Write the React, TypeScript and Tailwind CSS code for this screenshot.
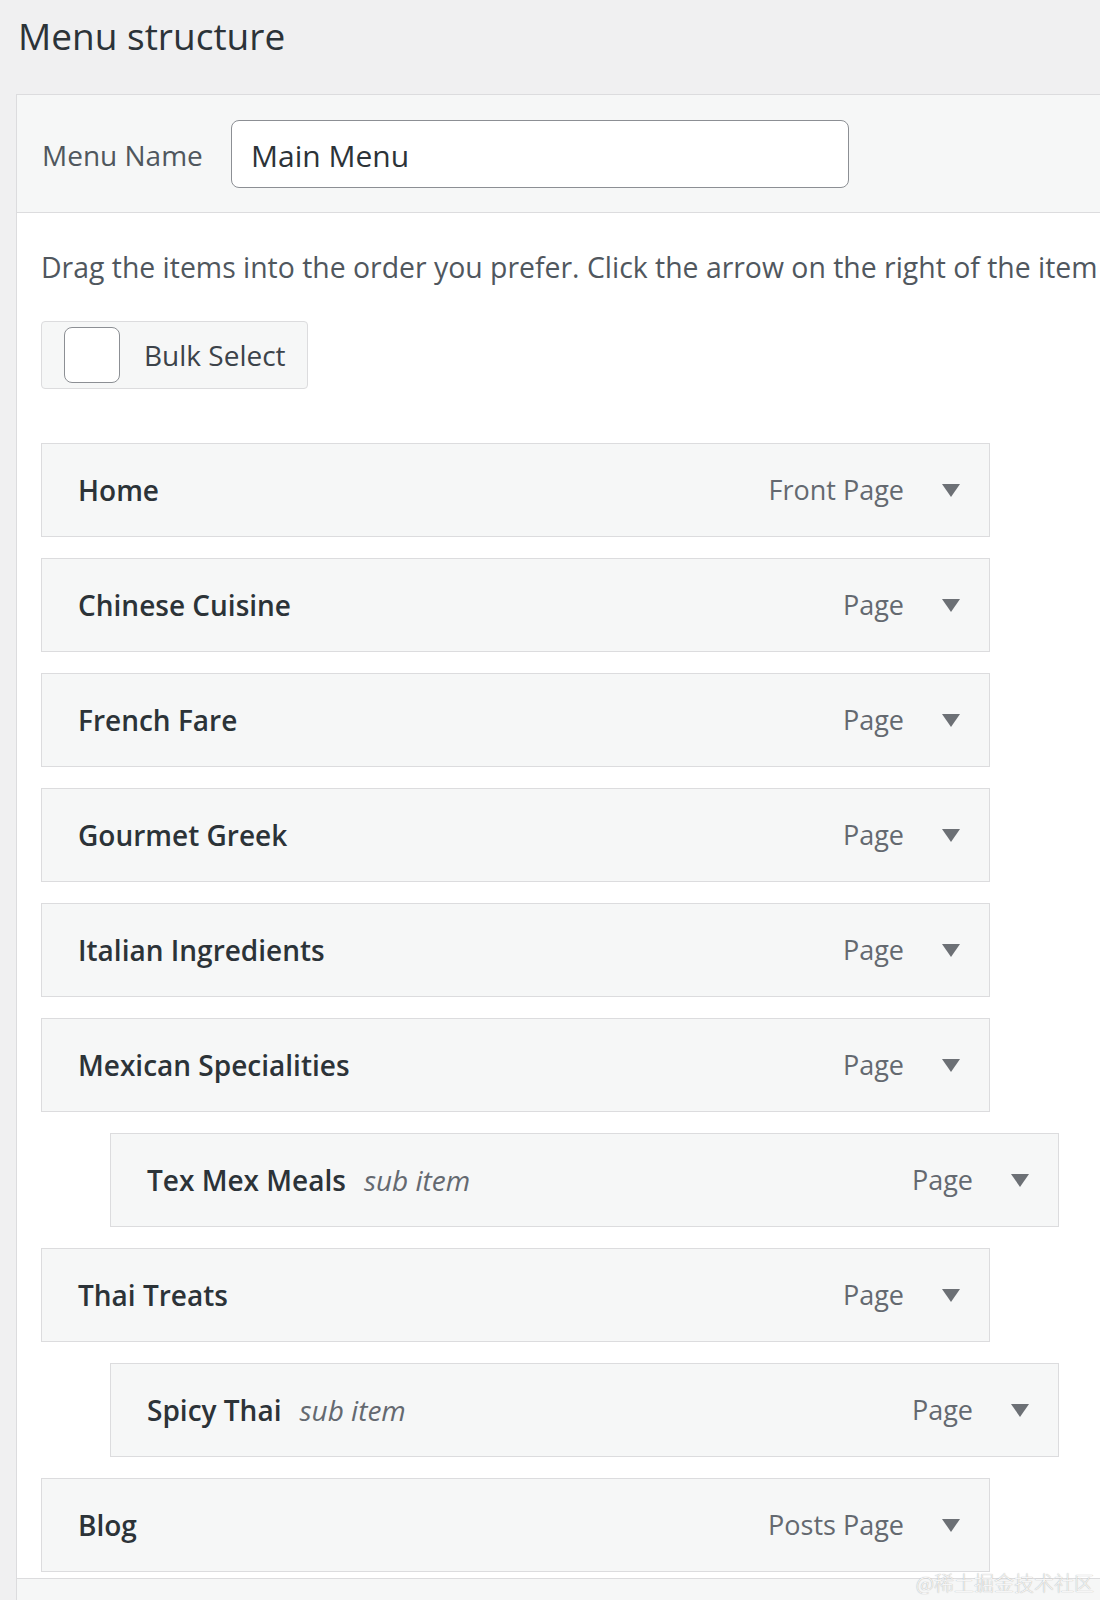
import React from 'react';

type MenuItem = { title: string; type: string; sub?: boolean };

const ITEMS: MenuItem[] = [
  { title: 'Home', type: 'Front Page' },
  { title: 'Chinese Cuisine', type: 'Page' },
  { title: 'French Fare', type: 'Page' },
  { title: 'Gourmet Greek', type: 'Page' },
  { title: 'Italian Ingredients', type: 'Page' },
  { title: 'Mexican Specialities', type: 'Page' },
  { title: 'Tex Mex Meals', type: 'Page', sub: true },
  { title: 'Thai Treats', type: 'Page' },
  { title: 'Spicy Thai', type: 'Page', sub: true },
  { title: 'Blog', type: 'Posts Page' },
];

const Arrow = () => (
  <svg width="18" height="13" viewBox="0 0 18 13" className="shrink-0">
    <path d="M0 0 H18 L9 13 Z" fill="#6c7075" />
  </svg>
);

const ItemRow = ({ item }: { item: MenuItem }) => (
  <div className={`${item.sub ? 'ml-[69px]' : ''} w-[949px] h-[94px] bg-[#f6f7f7] border border-[#dcdcde] flex items-center pl-[36px] pr-[29px]`}>
    <div className="flex-1 flex items-baseline">
      <span className="text-[28px] font-semibold text-[#2c3338]">{item.title}</span>
      {item.sub && <span className="ml-[18px] text-[28px] italic text-[#646970]">sub item</span>}
    </div>
    <span className="text-[27px] text-[#646970] mr-[38px]">{item.type}</span>
    <Arrow />
  </div>
);

export default function App() {
  return (
    <div className="relative w-[1100px] h-[1600px] overflow-hidden bg-[#f0f0f1] font-['Open_Sans',sans-serif]">
      <h2 className="pl-[18px] pt-[12px] text-[37px] leading-[48px] text-[#2c3338] font-medium">Menu structure</h2>

      <div className="mt-[34px] ml-[16px] w-[1200px] bg-white border border-[#dcdcde]">
        <div className="h-[118px] bg-[#f6f7f7] border-b border-[#dcdcde] flex items-center pl-[25px]">
          <label className="pt-[3px] text-[28px] text-[#50575e] w-[190px]">Menu Name</label>
          <div className="ml-[-1px] w-[618px] h-[68px] bg-white border border-[#8c8f94] rounded-[8px] flex items-center pl-[19px] pt-[3px] text-[30px] text-[#2c3338]">
            Main Menu
          </div>
        </div>

        <div className="pl-[24px] pt-[34px] pb-[6px]">
          <p className="whitespace-nowrap text-[28.4px] leading-[40px] text-[#50575e]">
            Drag the items into the order you prefer. Click the arrow on the right of the item
          </p>

          <div className="mt-[34px] w-[267px] h-[68px] bg-[#f6f7f7] border border-[#dcdcde] rounded-[4px] flex items-center pl-[22px]">
            <span className="w-[56px] h-[56px] bg-white border border-[#8c8f94] rounded-[8px]" />
            <span className="ml-[24px] text-[28px] text-[#3c434a]">Bulk Select</span>
          </div>

          <div className="mt-[54px] flex flex-col gap-[21px]">
            {ITEMS.map((item) => (
              <ItemRow key={item.title} item={item} />
            ))}
          </div>
        </div>

        <div className="h-[40px] bg-[#f6f7f7] border-t border-[#dcdcde]" />
      </div>

      <div className="absolute right-[6px] bottom-[4px] text-[20px] leading-[26px] text-[#f6f6f6] font-['Noto_Sans_CJK_SC',sans-serif] font-light [text-shadow:0_0_1px_#999]">
        @稀土掘金技术社区
      </div>
    </div>
  );
}
